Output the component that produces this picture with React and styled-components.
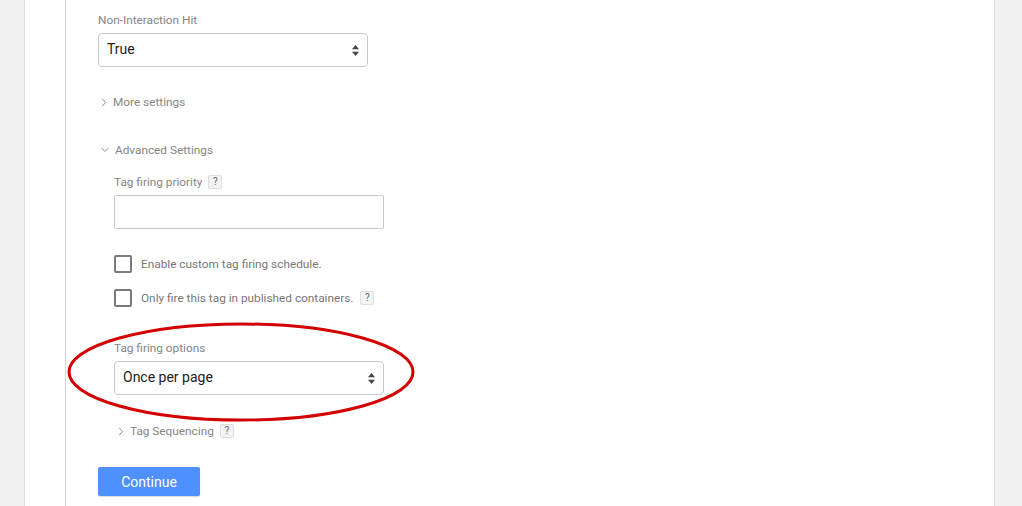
import React from "react"
import styled, { createGlobalStyle } from "styled-components"

const GlobalStyle = createGlobalStyle`
  html, body {
    margin: 0;
    padding: 0;
    background: #f1f1f1;
    font-family: Roboto, "Liberation Sans", Arial, sans-serif;
  }
`

const Chevron = ({ open }) =>
  open ? (
    <svg width="8" height="6" viewBox="0 0 8 6">
      <path d="M0.8 1.2 L4 4.4 L7.2 1.2" fill="none" stroke="#888" strokeWidth="1" />
    </svg>
  ) : (
    <svg width="6" height="9" viewBox="0 0 6 9">
      <path d="M1.2 0.8 L4.6 4.5 L1.2 8.2" fill="none" stroke="#888" strokeWidth="1" />
    </svg>
  )

const SelectArrows = () => (
  <svg width="7" height="11" viewBox="0 0 7 11">
    <path d="M3.5 0 L7 4.3 L0 4.3 Z" fill="#444" />
    <path d="M3.5 11 L7 6.7 L0 6.7 Z" fill="#444" />
  </svg>
)

export default function App() {
  return (
    <>
      <GlobalStyle />
      <Sheet>
        <Gutter />
        <Content>
          <Label>Non-Interaction Hit</Label>
          <Select width={270}>
            <span>True</span>
            <SelectArrows />
          </Select>

          <Toggle top={27}>
            <Chevron />
            More settings
          </Toggle>

          <Toggle top={32}>
            <Chevron open />
            Advanced Settings
          </Toggle>

          <Nested>
            <Label top={17}>
              Tag firing priority <Help>?</Help>
            </Label>
            <TextInput />

            <CheckRow top={26}>
              <Box />
              Enable custom tag firing schedule.
            </CheckRow>
            <CheckRow top={16}>
              <Box />
              Only fire this tag in published containers.<Help>?</Help>
            </CheckRow>

            <Highlighted>
              <Label>Tag firing options</Label>
              <Select width={270}>
                <span>Once per page</span>
                <SelectArrows />
              </Select>
              <Ring width="350" height="104" viewBox="0 0 350 104">
                <ellipse cx="174" cy="51" rx="172" ry="48" fill="none" stroke="#d20000" strokeWidth="3" />
              </Ring>
            </Highlighted>

            <Toggle top={28} inset={4}>
              <Chevron />
              Tag Sequencing <Help>?</Help>
            </Toggle>
          </Nested>

          <Button>Continue</Button>
        </Content>
      </Sheet>
    </>
  )
}

const Sheet = styled.div`
  display: flex;
  margin-left: 24px;
  width: 969px;
  height: 506px;
  background: #fff;
  border-left: 1px solid #e0e0e0;
  border-right: 1px solid #dcdcdc;
  overflow: hidden;
`

const Gutter = styled.div`
  width: 40px;
  flex-shrink: 0;
  border-right: 1px solid #d4d4d4;
`

const Content = styled.div`
  flex: 1;
  padding: 13px 0 0 32px;
  display: flex;
  flex-direction: column;
  align-items: flex-start;
`

const Label = styled.div`
  display: flex;
  align-items: center;
  gap: 6px;
  margin-top: ${(p) => p.top || 0}px;
  margin-bottom: 6px;
  font-size: 11.8px;
  line-height: 14px;
  color: #858585;
`

const Help = styled.span`
  display: inline-flex;
  align-items: center;
  justify-content: center;
  width: 12px;
  height: 12px;
  border: 1px solid #dedede;
  border-radius: 2px;
  background: #f3f3f3;
  font-size: 10px;
  color: #666;
`

const Select = styled.div`
  box-sizing: border-box;
  width: ${(p) => p.width}px;
  height: 34px;
  display: flex;
  align-items: center;
  justify-content: space-between;
  padding: 0 8px 2px 8px;
  border: 1px solid #c9c9c9;
  border-radius: 4px;
  background: #fff;
  font-size: 14px;
  color: #222;

  svg {
    margin-top: 2px;
  }
`

const Toggle = styled.div`
  display: flex;
  align-items: center;
  gap: 6px;
  margin-top: ${(p) => p.top}px;
  padding-left: ${(p) => p.inset || 3}px;
  font-size: 11.8px;
  line-height: 16px;
  color: #858585;

  svg {
    flex-shrink: 0;
  }
`

const Nested = styled.div`
  display: flex;
  flex-direction: column;
  align-items: flex-start;
  padding-left: 16px;
`

const TextInput = styled.div`
  box-sizing: border-box;
  width: 270px;
  height: 34px;
  border: 1px solid #c9c9c9;
  border-radius: 2px;
`

const CheckRow = styled.div`
  display: flex;
  align-items: center;
  gap: 9px;
  margin-top: ${(p) => p.top}px;
  font-size: 11.8px;
  line-height: 18px;
  color: #777;

  & > ${Help} {
    margin-left: -2px;
  }
`

const Box = styled.span`
  box-sizing: border-box;
  width: 18px;
  height: 18px;
  border: 2px solid #7a7a7a;
  border-radius: 2px;
`

const Highlighted = styled.div`
  position: relative;
  margin-top: 34px;
`

const Ring = styled.svg`
  position: absolute;
  left: -47px;
  top: -20px;
  pointer-events: none;
`

const Button = styled.button`
  margin-top: 28px;
  width: 102px;
  height: 29px;
  border: none;
  border-radius: 2px;
  background: #4d90fe;
  box-shadow: 0 1px 1px rgba(0, 0, 0, 0.15);
  font-family: Roboto, "Liberation Sans", Arial, sans-serif;
  font-size: 14px;
  color: #fff;
`
